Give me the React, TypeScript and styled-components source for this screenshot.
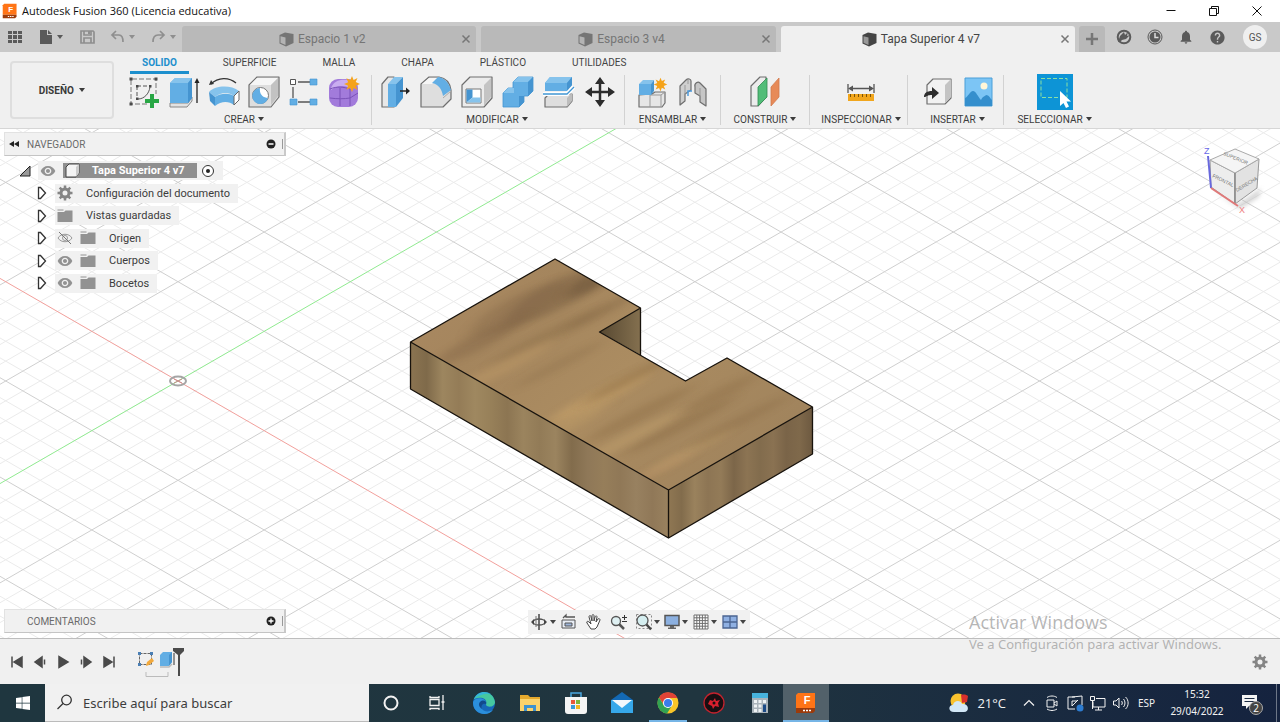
import React from "react";
import styled, { createGlobalStyle, css } from "styled-components";
import { MdNotifications, MdHelp, MdVisibility } from "react-icons/md";
import { FaWindows } from "react-icons/fa";

const uiFont = 'Roboto, "Liberation Sans", sans-serif';
const winFont = '"Open Sans", "Noto Sans", sans-serif';
const trayFont = '"Noto Sans", "Open Sans", sans-serif';

const GlobalStyle = createGlobalStyle`
  * { box-sizing: border-box; }
  body { margin: 0; background: #f0f0f0; font-family: ${uiFont}; color: #3c3c3c; }
  button, input { font: inherit; color: inherit; }
  button { border: 0; padding: 0; background: none; cursor: pointer; }
  ul { list-style: none; margin: 0; padding: 0; }
  svg { display: block; flex: none; }
`;

const Window = styled.div`
  position: relative;
  display: flex;
  flex-direction: column;
  min-height: 100vh;
  overflow: hidden;
`;

/* ---------- title bar ---------- */

const TitleBar = styled.header`
  display: flex;
  align-items: center;
  height: 22px;
  padding: 0 2px;
  background: #fff;
  color: #111;
  font-family: ${winFont};
`;

const Title = styled.h1`
  margin: 0 auto 0 4px;
  font-size: 11px;
  line-height: 16px;
  font-weight: 400;
`;

const CaptionButton = styled.button`
  display: flex;
  align-items: center;
  justify-content: center;
  width: 43px;
  height: 20px;
`;

/* ---------- document tabs ---------- */

const DocumentBar = styled.div`
  display: flex;
  height: 30px;
  background: #c9c9c9;
  color: #5c5c5c;
`;

const QuickAccess = styled.div`
  display: flex;
  align-items: center;
  gap: 15px;
  width: 182px;
  padding-left: 7px;
`;

const BarButton = styled.button<{ $dim?: boolean }>`
  display: flex;
  align-items: center;
  gap: 2px;
  color: ${(p) => (p.$dim ? "#8f8f8f" : "#5a5a5a")};
`;

const Tabs = styled.div`
  display: flex;
  flex: 1;
  gap: 5px;
  padding-top: 4px;
`;

const Tab = styled.div<{ $active?: boolean }>`
  display: flex;
  flex: 1;
  align-items: center;
  padding-left: 6px;
  border-radius: 3px 3px 0 0;
  background: ${(p) => (p.$active ? "#f0f0f0" : "#b9b9b9")};
  color: ${(p) => (p.$active ? "#454545" : "#757575")};
`;

const TabName = styled.button`
  display: flex;
  flex: 1;
  align-items: center;
  justify-content: center;
  gap: 4px;
  font-size: 12px;
  line-height: 16px;
`;

const TabClose = styled.button`
  display: flex;
  justify-content: center;
  width: 20px;
  color: #777;
`;

const AccountArea = styled.div`
  display: flex;
  align-items: center;
  gap: 15px;
  width: 205px;
  padding-left: 4px;
`;

const NewTab = styled.button`
  display: flex;
  align-self: flex-end;
  align-items: center;
  justify-content: center;
  width: 26px;
  height: 26px;
  margin-right: -4px;
  border-radius: 3px 3px 0 0;
  background: #b9b9b9;
  color: #777;
`;

const Avatar = styled.button`
  width: 24px;
  height: 24px;
  margin-left: 2px;
  border-radius: 50%;
  background: #efefef;
  color: #555;
  font-size: 10px;
`;

/* ---------- ribbon ---------- */

const Ribbon = styled.div`
  display: flex;
  height: 77px;
  border-bottom: 1px solid #d6d6d6;
  background: #f0f0f0;
`;

const Workspace = styled.button`
  width: 104px;
  height: 58px;
  margin: 9px 9px 0 10px;
  border: 2px solid #dedede;
  border-radius: 4px;
  color: #3a3a3a;
  font-size: 10px;
  font-weight: 700;
`;

const RibbonMain = styled.div`
  display: flex;
  flex: 1;
  flex-direction: column;
`;

const Categories = styled.nav`
  display: flex;
  gap: 22px;
  padding-left: 7px;
`;

const Category = styled.a<{ $active?: boolean }>`
  height: 22px;
  padding: 4px 12px 0;
  border-bottom: 3px solid ${(p) => (p.$active ? "#1d8fcd" : "transparent")};
  color: ${(p) => (p.$active ? "#1d8fcd" : "#444")};
  font-size: 10px;
  line-height: 14px;
  font-weight: ${(p) => (p.$active ? 700 : 400)};
  text-decoration: none;
`;

const Groups = styled.div`
  display: flex;
`;

const Group = styled.section<{ $width: number; $inset?: number; $lead?: number; $last?: boolean }>`
  display: flex;
  flex-direction: column;
  align-items: center;
  width: ${(p) => p.$width}px;
  height: 50px;
  margin-top: 1px;
  padding-right: ${(p) => p.$inset ?? 0}px;
  padding-left: ${(p) => p.$lead ?? 0}px;
  border-right: 1px solid ${(p) => (p.$last ? "transparent" : "#d2d2d2")};
`;

const Tools = styled.div<{ $gap?: number }>`
  display: flex;
  gap: ${(p) => p.$gap ?? 0}px;
  height: 36px;
  margin-top: -1px;
`;

const Tool = styled.button<{ $on?: boolean }>`
  display: flex;
  align-items: center;
  justify-content: center;
  width: ${(p) => (p.$on ? 36 : 40)}px;
  height: 36px;
  background: ${(p) => (p.$on ? "#0d94d6" : "none")};
`;

const GroupLabel = styled.button`
  margin-top: 3px;
  color: #3c3c3c;
  font-size: 10px;
  line-height: 14px;
  white-space: nowrap;
`;

const Caret = styled.span`
  display: inline-block;
  margin-left: 3px;
  border: 3px solid transparent;
  border-top: 4px solid currentColor;
  border-bottom: 0;
  vertical-align: 2px;
`;

/* ---------- modelling canvas ---------- */

const Canvas = styled.main`
  position: relative;
  flex: 1;
  min-height: 509px;
  overflow: hidden;
  background: #fff;
`;

const Scene = styled.svg`
  position: absolute;
  inset: 0;
  width: 100%;
  height: 100%;
`;

const CubeHolder = styled.div`
  position: absolute;
  top: 10px;
  right: 14px;
`;

const Browser = styled.aside`
  position: absolute;
  top: 3px;
  left: 4px;
  width: 282px;
`;

const Comments = styled.section`
  position: absolute;
  bottom: 5px;
  left: 4px;
  width: 282px;
`;

const PanelHeader = styled.div`
  display: flex;
  align-items: center;
  height: 24px;
  padding-left: 4px;
  border: 1px solid #e2e2e2;
  border-bottom-color: #c4c4c4;
  border-right: 2px solid #c9c9c9;
  background: #f1f1f1;
  color: #6a6a6a;
  font-size: 10px;
`;

const PanelTitle = styled.h2`
  margin: 0 auto 0 8px;
  font: inherit;
`;

const PanelDivider = styled.span`
  width: 1px;
  height: 10px;
  margin: 0 1px 0 6px;
  background: #999;
`;

const CollapseSlot = styled.button`
  width: 10px;
  height: 10px;
  color: #222;
`;

const Tree = styled.ul`
  display: flex;
  flex-direction: column;
  justify-content: space-between;
  height: 132px;
  margin-top: 5px;
`;

const TreeRow = styled.li<{ $root?: boolean }>`
  display: flex;
  align-items: center;
  height: 19px;
  padding-left: ${(p) => (p.$root ? 14 : 31)}px;
  font-size: 11px;
`;

const Expander = styled.button`
  width: 14px;
  margin-right: 6px;
`;

const RowBody = styled.span`
  display: flex;
  align-items: center;
  gap: 7px;
  height: 19px;
  padding: 0 8px 0 2px;
  background: #f1f1f1;
  color: #3c3c3c;
`;

const RowName = styled.span`
  padding-left: 6px;
  white-space: nowrap;
`;

const RootName = styled.span`
  display: flex;
  align-items: center;
  gap: 12px;
  height: 15px;
  margin-right: -3px;
  padding: 0 12px 0 2px;
  background: #8f8f8f;
  color: #fff;
  font-weight: 700;
  white-space: nowrap;
`;

const ViewBar = styled.div`
  position: absolute;
  bottom: 4px;
  left: 50%;
  display: flex;
  align-items: center;
  width: 222px;
  height: 24px;
  margin-left: -112px;
  padding-left: 3px;
  background: #f1f1f1;
`;

const ViewButton = styled.button<{ $menu?: boolean }>`
  display: flex;
  align-items: center;
  width: ${(p) => (p.$menu ? 29 : 25)}px;
  color: #444;
`;

/* ---------- timeline ---------- */

const Timeline = styled.footer`
  display: flex;
  align-items: center;
  height: 46px;
  padding: 0 12px 0 5px;
  border-top: 1px solid #bdbdbd;
  background: #f0f0f0;
  color: #4a4a4a;
`;

const PlayButton = styled.button`
  display: flex;
  justify-content: center;
  width: 23px;
`;

const Features = styled.button`
  margin: 0 auto 0 16px;
`;

/* ---------- desktop taskbar ---------- */

const Taskbar = styled.div`
  display: flex;
  height: 38px;
  background: linear-gradient(90deg, #1f363f 0%, #20353f 55%, #1b2d40 75%, #15233f 100%);
  color: #f2f2f2;
  font-family: ${winFont};
`;

const StartButton = styled.button`
  display: flex;
  align-items: center;
  justify-content: center;
  width: 45px;
  color: #fff;
`;

const SearchBox = styled.label`
  display: flex;
  align-items: center;
  gap: 10px;
  width: 324px;
  padding-left: 11px;
  border-bottom: 1px solid #bbb;
  background: #f1f1f1;
  color: #333;
`;

const SearchInput = styled.input`
  flex: 1;
  min-width: 0;
  border: 0;
  padding: 0;
  background: none;
  outline: 0;
  font-family: ${trayFont};
  font-size: 13px;
  line-height: 20px;
  &::placeholder { color: #3d3d3d; opacity: 1; }
`;

const TaskButton = styled.button<{ $running?: boolean; $current?: boolean }>`
  display: flex;
  align-items: center;
  justify-content: center;
  width: 46px;
  ${(p) => p.$running && css`background: linear-gradient(#76b5e6, #76b5e6) center bottom / 38px 2px no-repeat;`}
  ${(p) => p.$current && css`background: linear-gradient(#76b5e6, #76b5e6) center bottom / 46px 2px no-repeat, #52616a;`}
`;

const Tray = styled.div`
  display: flex;
  align-items: stretch;
  margin-left: auto;
`;

const Weather = styled.button`
  display: flex;
  align-items: center;
  gap: 7px;
  padding-right: 11px;
  font-size: 13px;
`;

const TrayButton = styled.button<{ $width?: number }>`
  display: flex;
  align-items: center;
  justify-content: center;
  width: ${(p) => p.$width ?? 23}px;
  font-family: ${trayFont};
  font-size: 10px;
  line-height: 17px;
`;

const ShowDesktop = styled.button`
  width: 4px;
  margin-left: 5px;
  border-left: 1px solid #6d7787;
`;

const Watermark = styled.div`
  position: absolute;
  right: 51px;
  bottom: 68px;
  width: 260px;
  color: rgba(150, 150, 150, 0.7);
  font-family: ${trayFont};
  font-size: 13px;
  line-height: 20px;
  white-space: nowrap;
  pointer-events: none;
`;

const WatermarkTitle = styled.div`
  font-family: ${winFont};
  font-size: 18px;
  line-height: 24px;
`;

/* ---------- icon drawings ---------- */

const outline = { stroke: "#6e6e6e", strokeWidth: 1.2, strokeLinejoin: "round" as const };
const BLUE = "#62aee4";
const BLUE_TOP = "#86c3ec";
const BLUE_DARK = "#4594d0";

const Ico = ({ s = 32, h, children }: { s?: number; h?: number; children: React.ReactNode }) => (
  <svg width={s} height={h ?? s} viewBox={`0 0 ${s} ${h ?? s}`} fill="none" aria-hidden="true">{children}</svg>
);

const Down = () => (
  <Ico s={8} h={6}><path d="M1 1h6L4 5z" fill="currentColor" /></Ico>
);

const DocCube = () => (
  <Ico s={15}>
    <path d="M0.500 3 6 0.500 14.500 2v9L7 14.500 0.500 11.500z" fill="currentColor" />
    <path d="M1.500 4.200 6.500 5.500v7.500L1.500 10.800z" fill="#fff" opacity=".45" />
  </Ico>
);

const Cross = () => (
  <Ico s={10}><path d="M1.500 1.500l7 7M8.500 1.500l-7 7" stroke="currentColor" strokeWidth="1.500" /></Ico>
);

const SketchIcon = () => (
  <Ico>
    <path d="M4 3h24v15M3 4v24h16" stroke="#777" strokeDasharray="5 2" />
    <path d="M9 10h13M9 10v13" stroke="#555" strokeDasharray="4 2" />
    <path d="M10 23c6 0 11-5 12-12" stroke="#555" />
    <path d="M1.500 1.500h3v3h-3zM26.500 1.500h3v3h-3zM1.500 26.500h3v3h-3zM8 9h2.500v2.500H8zM21 9h2.500v2.500H21zM8 21.500h2.500V24H8z" fill="#4a4a4a" />
    <path d="M22 18h4v5h5v4h-5v5h-4v-5h-5v-4h5z" fill="#28a745" />
  </Ico>
);

const ExtrudeIcon = () => (
  <Ico>
    <path d="M2 27h18l4-6v4l-5 6H2z" fill="#e2e2e2" stroke="#888" />
    <path d="M2 7v20h18l4-5V2H7z" fill={BLUE} />
    <path d="M2 7 7 2h17l-4 5z" fill={BLUE_TOP} />
    <path d="M20 7l4-5v20l-4 5z" fill={BLUE_DARK} />
    <path d="M29 27V5" stroke="#222" strokeWidth="1.300" />
    <path d="M26.500 7 29 2l2.500 5z" fill="#222" />
  </Ico>
);

const RevolveIcon = () => (
  <Ico>
    <path d="M3 8C10 1 21 1 28 7" stroke="#333" strokeWidth="1.300" />
    <path d="M1 9l2-5 3 4z" fill="#333" />
    <path d="M1 16C8 9 23 9 31 15l-5 5c-5-4-13-4-19 1z" fill={BLUE_TOP} />
    <path d="M1 16l6 5v9l-5-5z" fill={BLUE_DARK} />
    <path d="M7 21c6-4 14-4 19-1v9c-5-4-13-4-19 1z" fill={BLUE} />
    <path d="M26 20l5-5v9l-5 5z" fill="#fff" stroke="#666" />
  </Ico>
);

const HoleIcon = () => (
  <Ico>
    <path d="M1 9 9 1h22v20l-8 10H1z" fill="#dedede" {...outline} />
    <path d="M2 9l7-7h21l-7 7z" fill="#f6f6f6" />
    <path d="M23 9l7-7v18l-7 9z" fill="#c2c2c2" />
    <circle cx="12.500" cy="19.500" r="8" fill="#fff" stroke="#777" />
    <path d="M12 12a8 8 0 1 0 8 10c-5 0-9-4-8-10z" fill={BLUE} />
  </Ico>
);

const PatternIcon = () => (
  <Ico>
    <path d="M10 6h12M5 11v11M10 26h12" stroke="#555" strokeWidth="1.300" />
    <path d="M2.500 3.500h5v5h-5z" fill="#fff" stroke="#555" />
    <path d="M22 3h7v6h-7zM2 23h7v6H2zM22 23h7v6h-7z" fill={BLUE} stroke={BLUE_DARK} strokeWidth=".6" />
  </Ico>
);

const starPath = "M0-8l1.600 4 3.900-2-1.800 4L8 0l-4.200 1.800 1.800 4-4-1.900L0 8l-1.700-4-4 1.800 1.900-4L-8 0l4.200-1.800-1.900-4 4 1.900z";

const FormIcon = () => (
  <Ico>
    <rect x="1" y="3" width="29" height="28" rx="9" fill="#a27bdb" />
    <path d="M3 12c3-7 8-9 18-8l-1 7c-6-2-12-1-17 3z" fill="#c9adf0" />
    <path d="M2 13c7-3 14-2 20 0v17M12 12v18M2 22c7 1 14 1 20 0l8-5" stroke="#7a52b8" />
    <path d={starPath} transform="translate(24 8)" fill="#f5a31a" />
  </Ico>
);

const PressPullIcon = () => (
  <Ico>
    <path d="M3 8 9 1h6v30H3z" fill="#e8e8e8" {...outline} />
    <path d="M9 8h8v23H9z" fill={BLUE} />
    <path d="M9 8l6-7h9l-7 7z" fill={BLUE_TOP} />
    <path d="M17 8l7-7v21l-7 9z" fill={BLUE_DARK} />
    <path d="M21 15h7" stroke="#222" strokeWidth="1.500" />
    <path d="M27 11.500 31 15l-4 3.500z" fill="#222" />
  </Ico>
);

const FilletIcon = () => (
  <Ico>
    <path d="M1 8 9 1h10c7 1 11 6 12 13v9l-8 8H1z" fill="#dedede" {...outline} />
    <path d="M2 8l7-6h9l-6 6z" fill="#f6f6f6" />
    <path d="M23 22l8-7" stroke="#aaa" />
    <path d="M12 7l6-6c7 1 11 6 13 13l-8 6c-1-7-5-12-11-13z" fill={BLUE} />
  </Ico>
);

const ShellIcon = () => (
  <Ico>
    <path d="M1 9 9 1h22v21l-8 9H1z" fill="#ececec" {...outline} />
    <path d="M23 9l7-7v19l-7 9z" fill="#c4c4c4" />
    <path d="M5 13h15v14H5z" fill="#fff" stroke="#777" />
    <path d="M5.500 13.500h6v8l-6 5z" fill={BLUE_DARK} />
    <path d="M5.500 26.500l6-5h8v5z" fill={BLUE_TOP} />
  </Ico>
);

const CombineIcon = () => (
  <Ico>
    <path d="M11 6l5-5h15v14l-5 5h-4v6l-5 5H1V17l5-5h5z" fill={BLUE} stroke={BLUE_DARK} strokeWidth=".8" />
    <path d="M11 6l5-5h15l-5 5zM1 17l5-5h6v5z" fill={BLUE_TOP} />
    <path d="M26 6l5-5v14l-5 5zM17 20h5v6l-5 5z" fill={BLUE_DARK} />
  </Ico>
);

const SplitIcon = () => (
  <Ico>
    <path d="M2 22l4-4h23v7l-5 6H2z" fill="#dedede" {...outline} />
    <path d="M24 22l5-5v8l-5 6z" fill="#bdbdbd" />
    <path d="M2 7 7 1h22v8l-5 6H2z" fill={BLUE} />
    <path d="M2 7l5-6h22l-5 6z" fill={BLUE_TOP} />
    <path d="M24 7l5-6v8l-5 6z" fill={BLUE_DARK} />
    <path d="M0 18h24l7-7" stroke="#fff" strokeWidth="4" />
    <path d="M0 18h24l7-7" stroke="#4096d4" strokeWidth="1.300" />
  </Ico>
);

const MoveIcon = () => (
  <Ico>
    <path d="M16 5v22M5 16h22" stroke="#2c2c2c" strokeWidth="2.500" />
    <path d="M16 1l5 7H11zM16 31l-5-7h10zM1 16l7-5v10zM31 16l-7 5V11z" fill="#2c2c2c" />
  </Ico>
);

const ComponentIcon = () => (
  <Ico>
    <path d="M16 18l3-2h10v11l-3 4H3V19z" fill="#e6e6e6" {...outline} />
    <path d="M14 19h11v12M25 19l4-3M14 19v12" stroke="#999" />
    <path d="M3 8h12v11H3z" fill={BLUE} />
    <path d="M3 8l4-4h11l-3 4z" fill={BLUE_TOP} />
    <path d="M15 8l3-4v11l-3 4z" fill={BLUE_DARK} />
    <path d={starPath} transform="translate(24.500 8.500) scale(.85)" fill="#f5a31a" />
  </Ico>
);

const JointIcon = () => (
  <Ico>
    <path d="M3 10l6-6c2-2 5-1 5 1v9l-6 4v7l-5 4z" fill="#cfcfcf" {...outline} />
    <path d="M8 9v9M11 4v4" stroke="#999" />
    <path d="M18 11c-1-4 3-6 5-4l6 6v17l-6-4v-6l-5-3z" fill="#c6c6c6" {...outline} />
    <path d="M23 12v9" stroke="#999" />
    <path d="M11 20v-5h4" stroke="#4d9bdb" strokeWidth="1.500" />
  </Ico>
);

const PlaneIcon = () => (
  <Ico>
    <path d="M2 10l9-9h6v20l-8 9H2z" fill="#ececec" {...outline} />
    <path d="M9 11l9-9v19l-9 9z" fill="#52bd78" stroke="#318c52" strokeWidth=".8" />
    <path d="M22 11l8-9v19l-8 9z" fill="#e78a58" stroke="#d27a4c" strokeWidth=".8" />
  </Ico>
);

const MeasureIcon = () => (
  <Ico>
    <path d="M3 8v9M29 8v9M5 12.500h22" stroke="#555" strokeWidth="1.300" />
    <path d="M3 12.500l5-3v6zM29 12.500l-5-3v6z" fill="#555" />
    <path d="M3 18h26v7H3z" fill="#f1a61d" />
    <path d="M5.500 18v3M9.500 18v3M13.500 18v3M17.500 18v3M21.500 18v3M25.500 18v3" stroke="#7a5208" />
  </Ico>
);

const InsertIcon = () => (
  <Ico>
    <path d="M5 9l6-6h18v19l-6 6H5z" fill="#f2f2f2" {...outline} />
    <path d="M23 9l6-6v18l-6 6z" fill="#c4c4c4" />
    <path d="M2 21c0-4 3-6 8-6v-4l7 6-7 6v-4c-4 0-5 1-7 2z" fill="#2e2e2e" />
  </Ico>
);

const ImageIcon = () => (
  <Ico>
    <path d="M3 2h27v28H3z" fill="#7cc5f5" stroke="#4a9fd8" />
    <circle cx="22" cy="10" r="3.500" fill="#fff6d8" />
    <path d="M3 22c3-1 5-7 8-7s5 6 8 9c2-4 3-3 5-5 3 0 4 3 6 5v6H3z" fill="#358fcd" />
  </Ico>
);

const SelectIcon = () => (
  <Ico>
    <path d="M2 2.500h26v19H2z" stroke="#8be0a2" strokeDasharray="4 2" />
    <path d="M21 15v15l3.500-3 2.500 5 3-1.500-2.500-5H32z" fill="#fff" />
  </Ico>
);

const Eye = () => <MdVisibility size={16} color="#929292" />;

const EyeOff = () => (
  <Ico s={16}>
    <path d="M1 8c3-5 11-5 14 0-3 5-11 5-14 0z" stroke="#999" />
    <circle cx="8" cy="8" r="2.500" stroke="#999" />
    <path d="M2 2l12 12" stroke="#777" />
  </Ico>
);

const Folder = () => (
  <Ico s={16}><path d="M0.500 4h6.500l1.500-1.500h7V14h-15z" fill="#929292" /><path d="M0.500 2h6" stroke="#929292" /></Ico>
);

const Gear = ({ s = 16 }: { s?: number }) => (
  <Ico s={s}>
    <circle cx="8" cy="8" r="4" stroke="#858585" strokeWidth="3" />
    <path d="M8 0.500v3M8 12.500v3M0.500 8h3M12.500 8h3M2.700 2.700l2 2M11.300 11.300l2 2M2.700 13.300l2-2M11.300 4.700l2-2" stroke="#858585" strokeWidth="2.500" />
  </Ico>
);

/* ---------- canvas scene ---------- */

const ORIGIN = { x: 178, y: 252 };
const STEP = { x: 17.23, y: 9.93 };

const gridLines = (dir: 1 | -1) => {
  const lines: { k: number; d: string }[] = [];
  for (let k = -120; k <= 160; k++) {
    const x = ORIGIN.x + k * STEP.x;
    const y = ORIGIN.y - dir * k * STEP.y;
    const rx = 200 * STEP.x;
    const ry = 200 * STEP.y * dir;
    lines.push({ k, d: `M${x - rx} ${y - ry}L${x + rx} ${y + ry}` });
  }
  return lines;
};

const allLines = [...gridLines(1), ...gridLines(-1)];
const minorPath = allLines.filter((l) => l.k % 5 !== 0).map((l) => l.d).join("");
const majorPath = allLines.filter((l) => l.k % 5 === 0 && l.k !== 0).map((l) => l.d).join("");

const grain = [
  { x: 560, y: 165, rx: 60, ry: 14, c: "#6f573c", o: 0.35 },
  { x: 590, y: 154, rx: 26, ry: 8, c: "#4f3b27", o: 0.3 },
  { x: 520, y: 180, rx: 55, ry: 14, c: "#7b5f42", o: 0.3 },
  { x: 480, y: 212, rx: 50, ry: 8, c: "#7b5f42", o: 0.35 },
  { x: 600, y: 183, rx: 40, ry: 5, c: "#7d6040", o: 0.35 },
  { x: 545, y: 208, rx: 60, ry: 6, c: "#836643", o: 0.3 },
  { x: 500, y: 240, rx: 60, ry: 7, c: "#bb9867", o: 0.5 },
  { x: 560, y: 235, rx: 50, ry: 5, c: "#8a6d48", o: 0.3 },
  { x: 600, y: 268, rx: 60, ry: 8, c: "#c5a06a", o: 0.6 },
  { x: 570, y: 295, rx: 45, ry: 6, c: "#bd9b67", o: 0.45 },
  { x: 625, y: 252, rx: 45, ry: 5, c: "#83653e", o: 0.4 },
  { x: 640, y: 285, rx: 60, ry: 6, c: "#8a6b42", o: 0.35 },
  { x: 630, y: 309, rx: 60, ry: 6, c: "#c1a06d", o: 0.45 },
  { x: 680, y: 297, rx: 60, ry: 5, c: "#84653f", o: 0.35 },
  { x: 720, y: 265, rx: 40, ry: 6, c: "#8b6c45", o: 0.35 },
  { x: 690, y: 322, rx: 50, ry: 5, c: "#c0a06e", o: 0.4 },
  { x: 740, y: 292, rx: 55, ry: 5, c: "#876843", o: 0.3 },
  { x: 660, y: 340, rx: 40, ry: 5, c: "#bd9468", o: 0.4 },
];

const frontBands = ["#8b7451", "#7f6a4a", "#9d865f", "#947c57", "#9f8860", "#978059", "#8c7552", "#9b845e", "#927b57", "#9b845f", "#826c4c", "#8f7858", "#967e5a", "#907857", "#988160", "#907858", "#9a825f"];
const rightBands = ["#8f7753", "#826c4c", "#9a825d", "#8d7554", "#937b58", "#7c6649", "#8c7453", "#826c4d", "#8a7252", "#7a6448", "#7f694b", "#6d5940"];

const Bands = ({ id, colors }: { id: string; colors: string[] }) => (
  <linearGradient id={id}>
    {colors.map((c, i) => (
      <stop key={i} offset={i / (colors.length - 1)} stopColor={c} />
    ))}
  </linearGradient>
);

const TOP_FACE = "M410.500 213L555 130L640.500 179L599.500 203L685.500 252L727 229L812.500 278L668.500 361Z";

const ModelScene = () => (
  <Scene role="img" aria-label="Tapa Superior 4 v7">
    <defs>
      <Bands id="front" colors={frontBands} />
      <Bands id="right" colors={rightBands} />
      <linearGradient id="top" x1="0" y1="0" x2="1" y2="0.6">
        <stop offset="0" stopColor="#ac8a63" />
        <stop offset=".3" stopColor="#a4855d" />
        <stop offset=".6" stopColor="#ab8c61" />
        <stop offset="1" stopColor="#a1845d" />
      </linearGradient>
      <linearGradient id="notch"><stop offset="0" stopColor="#574831" /><stop offset="1" stopColor="#84704f" /></linearGradient>
      <clipPath id="topClip"><path d={TOP_FACE} /></clipPath>
      <filter id="soft" x="-30%" y="-150%" width="160%" height="400%"><feGaussianBlur stdDeviation="9 3" /></filter>
    </defs>
    <path d={minorPath} stroke="#ebebeb" />
    <path d={majorPath} stroke="#cfcfcf" />
    <path d="M-3268-1734L178 252L3624 2238" stroke="#f2a09c" />
    <path d="M-3268 2238L178 252L3624-1734" stroke="#90ea90" />
    <ellipse cx="178" cy="252" rx="8" ry="4.500" fill="none" stroke="#a5a5a5" strokeWidth="2" />
    <path d="M174 250l8 4M182 250l-8 4" stroke="#c78b8b" />
    <path d="M640 226L685.500 252" stroke="#a9b4c4" />
    <path d={TOP_FACE} fill="url(#top)" />
    <g clipPath="url(#topClip)">
      {grain.map((g, i) => (
        <g key={i} transform={`translate(${g.x} ${g.y}) rotate(-27)`}>
          <ellipse rx={g.rx} ry={g.ry} fill={g.c} opacity={g.o} filter="url(#soft)" />
        </g>
      ))}
    </g>
    <path d="M410.500 213L668.500 361V409L410.500 260Z" fill="url(#front)" />
    <path d="M668.500 361L812.500 278V325L668.500 409Z" fill="url(#right)" />
    <path d="M599.500 203L640.500 179V226Z" fill="url(#notch)" />
    <path d={`${TOP_FACE}M410.500 213V260L668.500 409L812.500 325V278M668.500 361V409M640.500 179V226`} fill="none" stroke="#17120c" strokeWidth="1.300" strokeLinejoin="round" />
  </Scene>
);

const ViewCube = () => (
  <svg width="66" height="78" viewBox="0 0 66 78" fontFamily="Liberation Sans" aria-label="ViewCube">
    <defs>
      <filter id="cubeShadow"><feGaussianBlur stdDeviation="2" /></filter>
    </defs>
    <path d="M12 51l26 14 23-16-2 9-19 12z" fill="#bbb" opacity=".6" filter="url(#cubeShadow)" />
    <path d="M10 21l25 13v31L11 48z" fill="#ededed" stroke="#999" />
    <path d="M35 34l24-14-2 29-22 16z" fill="#e2e2e2" stroke="#999" />
    <path d="M10 21 35 10l24 10-24 14z" fill="#f5f5f5" stroke="#aaa" />
    <path d="M35 34v30" stroke="#777" />
    <path d="M8 17l3 32" stroke="#6868dd" strokeWidth="2" />
    <path d="M11 49l27 18" stroke="#e07878" strokeWidth="2" />
    <text x="4" y="15" fontSize="9" fill="#6868e8">Z</text>
    <text x="39" y="74" fontSize="9" fill="#f08080">X</text>
    <g fill="#777" fontSize="5">
      <text transform="translate(23 16) rotate(22)">SUPERIOR</text>
      <text transform="translate(12 38) rotate(26)">FRONTAL</text>
      <text transform="translate(37 53) rotate(-31)">DERECHA</text>
    </g>
  </svg>
);

/* ---------- data ---------- */

type ToolDef = { name: string; icon: React.ReactNode; on?: boolean };
const groups: { label: string; width: number; gap?: number; inset?: number; lead?: number; tools: ToolDef[] }[] = [
  {
    label: "CREAR", width: 249, inset: 6,
    tools: [
      { name: "Crear boceto", icon: <SketchIcon /> },
      { name: "Extruir", icon: <ExtrudeIcon /> },
      { name: "Revolución", icon: <RevolveIcon /> },
      { name: "Agujero", icon: <HoleIcon /> },
      { name: "Patrón", icon: <PatternIcon /> },
      { name: "Crear forma", icon: <FormIcon /> },
    ],
  },
  {
    label: "MODIFICAR", width: 253, gap: 1, inset: 2,
    tools: [
      { name: "Pulsar/tirar", icon: <PressPullIcon /> },
      { name: "Empalme", icon: <FilletIcon /> },
      { name: "Vaciado", icon: <ShellIcon /> },
      { name: "Combinar", icon: <CombineIcon /> },
      { name: "Dividir cuerpo", icon: <SplitIcon /> },
      { name: "Mover", icon: <MoveIcon /> },
    ],
  },
  { label: "ENSAMBLAR", width: 96, gap: 1, tools: [{ name: "Nuevo componente", icon: <ComponentIcon /> }, { name: "Unión", icon: <JointIcon /> }] },
  { label: "CONSTRUIR", width: 89, tools: [{ name: "Plano", icon: <PlaneIcon /> }] },
  { label: "INSPECCIONAR", width: 98, lead: 5, tools: [{ name: "Medir", icon: <MeasureIcon /> }] },
  { label: "INSERTAR", width: 96, lead: 4, tools: [{ name: "Insertar derivada", icon: <InsertIcon /> }, { name: "Lienzo", icon: <ImageIcon /> }] },
  { label: "SELECCIONAR", width: 102, tools: [{ name: "Seleccionar", icon: <SelectIcon />, on: true }] },
];

const categories = ["SOLIDO", "SUPERFICIE", "MALLA", "CHAPA", "PLÁSTICO", "UTILIDADES"];
const documents = ["Espacio 1 v2", "Espacio 3 v4", "Tapa Superior 4 v7"];

const nodes: { name: string; icons: React.ReactNode[] }[] = [
  { name: "Configuración del documento", icons: [<Gear key="g" />] },
  { name: "Vistas guardadas", icons: [<Folder key="f" />] },
  { name: "Origen", icons: [<EyeOff key="e" />, <Folder key="f" />] },
  { name: "Cuerpos", icons: [<Eye key="e" />, <Folder key="f" />] },
  { name: "Bocetos", icons: [<Eye key="e" />, <Folder key="f" />] },
];

const viewTools: { name: string; menu?: boolean; icon: React.ReactNode }[] = [
  { name: "Órbita", menu: true, icon: <Ico s={18}><path d="M8 1v16" stroke="#444" strokeWidth="1.500" /><ellipse cx="8" cy="9" rx="6" ry="3" stroke="#555" strokeWidth="1.300" /><path d="M5 3v11" stroke="#777" /><path d="M0 9l3-3v6zM16 9l-3-3v6z" fill="#444" /></Ico> },
  { name: "Mirar a", icon: <Ico s={18}><path d="M2 7h13v8H2z" fill="#e8edf5" stroke="#555" /><path d="M5 10h7v3H5z" fill="#9db4d8" stroke="#555" /><path d="M3 5l3-3v2h9" stroke="#555" strokeWidth="1.300" /></Ico> },
  { name: "Encuadre", icon: <Ico s={18}><path d="M6 16 2 10c-1-2 1-2 2-1l2 2-2-7c0-2 2-2 2 0l1 4V3c0-2 2-2 2 0v5l1-4c1-2 2-1 2 0l-1 5 2-3c1-1 2 0 2 1l-3 7-2 2z" fill="#fff" stroke="#444" /></Ico> },
  { name: "Zoom", icon: <Ico s={18}><circle cx="6" cy="8" r="4.500" fill="#dff0f2" stroke="#555" strokeWidth="1.300" /><path d="M9 11l5 5" stroke="#555" strokeWidth="2.500" /><path d="M12 4.500h5M14.500 2v5M12 8.500h5" stroke="#333" /></Ico> },
  { name: "Zoom ventana", menu: true, icon: <Ico s={18}><path d="M1.500 1.500h15v14h-15z" stroke="#888" strokeDasharray="2 2" /><circle cx="7.500" cy="7.500" r="5.500" fill="#d5eef0" stroke="#555" strokeWidth="1.300" /><path d="M11.500 11.500l4.500 5" stroke="#444" strokeWidth="2.500" /></Ico> },
  { name: "Visualización", menu: true, icon: <Ico s={18}><path d="M2 2.500h14v10H2z" fill="#8cb0e0" stroke="#555" strokeWidth="1.500" /><path d="M7 13h4v1.500h2V16H5v-1.500h2z" fill="#666" /></Ico> },
  { name: "Rejilla", menu: true, icon: <Ico s={18}><path d="M2 2h14v14H2zM2 4.800h14M2 7.600h14M2 10.400h14M2 13.200h14M4.800 2v14M7.600 2v14M10.400 2v14M13.200 2v14" fill="#fff" stroke="#6e6e6e" /></Ico> },
  { name: "Ventanas", menu: true, icon: <Ico s={18}><path d="M2 3h14v12H2zM9 3v12M2 9h14" fill="#8fb0e2" stroke="#4b6491" strokeWidth="1.300" /></Ico> },
];

const playback = [
  { name: "Inicio", d: "M3 2.500v11M13 3v10L5 8z" },
  { name: "Paso atrás", d: "M10 3v10L3 8zM12.500 5.500v5" },
  { name: "Reproducir", d: "M4 2.500v11L13 8z" },
  { name: "Paso adelante", d: "M6 3v10l7-5zM3.500 5.500v5" },
  { name: "Final", d: "M13 2.500v11M3 3v10l8-5z" },
];

const taskApps: { name: string; running?: boolean; current?: boolean; icon: React.ReactNode }[] = [
  { name: "Cortana", icon: <Ico s={18}><circle cx="8" cy="9" r="6.500" stroke="#f2f2f2" strokeWidth="2" /></Ico> },
  { name: "Vista de tareas", icon: <Ico s={18}><path d="M1 5.500h9v6H1zM1 2v1.500h9V2M1 16v-1.500h9V16M14 1v15M12.500 8h3" stroke="#f2f2f2" strokeWidth="1.300" /></Ico> },
  { name: "Edge", icon: <Ico s={24}><circle cx="12" cy="12" r="11" fill="#1768b8" /><path d="M2 8C6-1 21-1 23 11c0 5-7 6-9 3 2-6-4-9-12-6z" fill="#46c8a0" /><path d="M2 8c3-7 11-9 17-5-6-1-12 1-17 5z" fill="#35b8d8" /><path d="M1 11c3-6 13-4 13 1-4-2-6 3-4 6s7 3 11 1c-3 4-9 5-13 3-5-2-7-6-7-11z" fill="#2b8fdc" /><path d="M8 11c3-3 7-1 6 2-4-1-5 2-4 5-3-2-4-5-2-7z" fill="#124a8c" /></Ico> },
  { name: "Explorador", icon: <Ico s={22}><path d="M1 3h8l2 2h10v14H1z" fill="#e5a92d" /><path d="M1 7h20v12H1z" fill="#fbd36b" /><path d="M5 19v-6h12v6h-3v-3H8v3z" fill="#3e93d0" /></Ico> },
  { name: "Store", icon: <Ico s={24}><path d="M7 7V2h10v5" stroke="#4aa6df" strokeWidth="1.500" /><path d="M1 6h22v14c0 2-1 3-3 3H4c-2 0-3-1-3-3z" fill="#f4f4f4" /><path d="M7 9h4v4H7z" fill="#e8573b" /><path d="M12 9h4v4h-4z" fill="#7db53c" /><path d="M7 14h4v4H7z" fill="#3a9adb" /><path d="M12 14h4v4h-4z" fill="#f2b722" /></Ico> },
  { name: "Correo", icon: <Ico s={24}><path d="M1 9 12 1l11 8v12H1z" fill="#1369b4" /><path d="M1 9h22v13H1z" fill="#36a8ea" /><path d="M2 9h20l-10 8z" fill="#f3f8fc" /></Ico> },
  { name: "Chrome", running: true, icon: <Ico s={22}><circle cx="11" cy="11" r="10.500" fill="#f8c528" /><path d="M2 5.500A10.500 10.500 0 0 1 20.500 6H11l-4 7z" fill="#e04336" /><path d="M2 5.500A10.500 10.500 0 0 0 10 21.500l5-8-8 0z" fill="#31a352" /><circle cx="11" cy="11" r="5" fill="#fff" /><circle cx="11" cy="11" r="4" fill="#3a7de8" /></Ico> },
  { name: "Juegos", icon: <Ico s={24}><circle cx="12" cy="12" r="10" fill="#180f12" stroke="#c4222d" strokeWidth="1.300" /><path d="M6 13l2-4 3 1 2-3 1 3 4-1-2 3 1 4-4-1-2 3-1-3z" fill="#d9202e" /><circle cx="12" cy="12" r="1.500" fill="#180f12" /></Ico> },
  { name: "Calculadora", icon: <Ico s={22}><path d="M3 1h16v20H3z" fill="#a9b3ba" /><path d="M3 1h16v5H3z" fill="#47b3dd" /><path d="M5 8h3v3H5zM9.500 8h3v3h-3zM14 8h3v3h-3zM5 12.500h3v3H5zM9.500 12.500h3v3h-3zM5 17h3v3H5zM9.500 17h3v3h-3z" fill="#eef2f4" /><path d="M14 12.500h3V20h-3z" fill="#1b4a86" /></Ico> },
  { name: "Fusion 360", current: true, icon: <FusionLogo s={22} /> },
];

function FusionLogo({ s }: { s: number }) {
  return (
    <svg width={s} height={s} viewBox="0 0 22 22" aria-hidden="true">
      <path d="M3 1h17v15H1V3z" fill="#ff7416" />
      <path d="M1 16h19v3l-2 2H1z" fill="#9c3b0b" />
      <text x="12" y="12" fill="#fff" fontFamily="Liberation Sans" fontWeight="700" fontSize="11" textAnchor="middle">F</text>
      <path d="M8 18.500h8" stroke="#fff" strokeWidth="1.500" strokeDasharray="2 1" />
    </svg>
  );
}

/* ---------- page ---------- */

export default function App() {
  return (
    <Window>
      <GlobalStyle />
      <TitleBar>
        <FusionLogo s={16} />
        <Title>Autodesk Fusion 360 (Licencia educativa)</Title>
        <CaptionButton aria-label="Minimizar"><Ico s={12}><path d="M1.500 5.500h9" stroke="#111" /></Ico></CaptionButton>
        <CaptionButton aria-label="Restaurar"><Ico s={12}><path d="M1.500 3.500h7v7h-7zM3.500 3.500v-2h7v7h-2" stroke="#111" /></Ico></CaptionButton>
        <CaptionButton aria-label="Cerrar"><Ico s={12}><path d="M1.500 1.500l9 9M10.500 1.500l-9 9" stroke="#111" /></Ico></CaptionButton>
      </TitleBar>

      <DocumentBar>
        <QuickAccess>
          <BarButton aria-label="Panel de datos"><Ico s={16}><path d="M1 2h4v3H1zM6 2h4v3H6zM11 2h4v3h-4zM1 6h4v4H1zM6 6h4v4H6zM11 6h4v4h-4zM1 11h4v3H1zM6 11h4v3H6zM11 11h4v3h-4z" fill="currentColor" /></Ico></BarButton>
          <BarButton aria-label="Archivo"><Ico s={16}><path d="M2 1h7v5h5v9H2zM10 1l4 4h-4z" fill="currentColor" /></Ico><Down /></BarButton>
          <BarButton $dim aria-label="Guardar"><Ico s={16}><path d="M2 2h12l1 1v11H2zM5 2v4h7V2M5 14v-5h7v5" stroke="currentColor" strokeWidth="1.700" /><path d="M9 2h2v3H9z" fill="currentColor" /></Ico></BarButton>
          <BarButton $dim aria-label="Deshacer"><Ico s={16}><path d="M6 2 2 6l4 4M2.500 6H9c3 0 4 3 4 7" stroke="currentColor" strokeWidth="1.700" /></Ico><Down /></BarButton>
          <BarButton $dim aria-label="Rehacer"><Ico s={16}><path d="M9 2l4 4-4 4M12.500 6H7c-4 0-5 3-5 7" stroke="currentColor" strokeWidth="1.700" /></Ico><Down /></BarButton>
        </QuickAccess>
        <Tabs>
          {documents.map((d, i) => (
            <Tab key={d} $active={i === 2}>
              <TabName><DocCube />{d}</TabName>
              <TabClose aria-label={`Cerrar ${d}`}><Cross /></TabClose>
            </Tab>
          ))}
        </Tabs>
        <AccountArea>
          <NewTab aria-label="Nuevo diseño"><Ico s={14}><path d="M7 1v12M1 7h12" stroke="currentColor" strokeWidth="2.500" /></Ico></NewTab>
          <BarButton aria-label="Extensiones"><Ico s={16}><circle cx="8" cy="8" r="6.300" stroke="currentColor" strokeWidth="2" /><path d="M2 13l2-6 4-4 1 3 3-3-1 4 3-1-4 4-4 1-2 2z" fill="currentColor" /></Ico></BarButton>
          <BarButton aria-label="Estado de trabajos"><Ico s={16}><circle cx="8" cy="8" r="7" stroke="currentColor" /><circle cx="8" cy="8" r="5.500" fill="currentColor" /><path d="M8 4v4.500h3.500" stroke="#ddd" strokeWidth="1.500" /></Ico></BarButton>
          <BarButton aria-label="Notificaciones"><MdNotifications size={16} /></BarButton>
          <BarButton aria-label="Ayuda"><MdHelp size={17} /></BarButton>
          <Avatar>GS</Avatar>
        </AccountArea>
      </DocumentBar>

      <Ribbon>
        <Workspace>DISEÑO <Caret /></Workspace>
        <RibbonMain>
          <Categories>
            {categories.map((c, i) => <Category key={c} href="#" $active={i === 0}>{c}</Category>)}
          </Categories>
          <Groups>
            {groups.map((g, i) => (
              <Group key={g.label} $width={g.width} $inset={g.inset} $lead={g.lead} $last={i === groups.length - 1}>
                <Tools $gap={g.gap}>
                  {g.tools.map((t) => <Tool key={t.name} $on={t.on} aria-label={t.name}>{t.icon}</Tool>)}
                </Tools>
                <GroupLabel>{g.label}<Caret /></GroupLabel>
              </Group>
            ))}
          </Groups>
        </RibbonMain>
      </Ribbon>

      <Canvas>
        <ModelScene />
        <CubeHolder><ViewCube /></CubeHolder>
        <Browser>
          <PanelHeader>
            <CollapseSlot aria-label="Contraer"><Ico s={10}><path d="M5 2v6L0 5zM10 2v6L5 5z" fill="currentColor" /></Ico></CollapseSlot>
            <PanelTitle>NAVEGADOR</PanelTitle>
            <CollapseSlot aria-label="Opciones"><Ico s={10}><circle cx="5" cy="5" r="4.500" fill="#222" /><path d="M2.500 5h5" stroke="#fff" strokeWidth="1.500" /></Ico></CollapseSlot>
            <PanelDivider />
          </PanelHeader>
          <Tree>
            <TreeRow $root>
              <Expander aria-label="Contraer"><Ico s={14}><path d="M12 2v10H2z" fill="#999" stroke="#222" /></Ico></Expander>
              <RowBody>
                <Eye />
                <RootName><Ico s={15}><path d="M1 4l3-3h10v9l-3 4H1z" fill="#f4f4f4" stroke="#444" /><path d="M11 4l3-3v9l-3 4z" fill="#ccc" /></Ico>Tapa Superior 4 v7</RootName>
                <Ico s={14}><circle cx="7" cy="7" r="5.500" fill="#fff" stroke="#333" /><circle cx="7" cy="7" r="2" fill="#222" /></Ico>
              </RowBody>
            </TreeRow>
            {nodes.map((n) => (
              <TreeRow key={n.name}>
                <Expander aria-label={`Expandir ${n.name}`}><Ico s={14}><path d="M3.500 1.500h2l5 5.500-5 5.500h-2z" fill="#fff" stroke="#333" strokeWidth="1.300" /></Ico></Expander>
                <RowBody>{n.icons}<RowName>{n.name}</RowName></RowBody>
              </TreeRow>
            ))}
          </Tree>
        </Browser>
        <Comments>
          <PanelHeader>
            <CollapseSlot aria-hidden="true" tabIndex={-1} />
            <PanelTitle>COMENTARIOS</PanelTitle>
            <CollapseSlot aria-label="Añadir comentario"><Ico s={10}><circle cx="5" cy="5" r="4.500" fill="#222" /><path d="M2.500 5h5M5 2.500v5" stroke="#fff" strokeWidth="1.300" /></Ico></CollapseSlot>
            <PanelDivider />
          </PanelHeader>
        </Comments>
        <ViewBar>
          {viewTools.map((t) => (
            <ViewButton key={t.name} $menu={t.menu} aria-label={t.name}>{t.icon}{t.menu && <Down />}</ViewButton>
          ))}
        </ViewBar>
      </Canvas>

      <Timeline>
        {playback.map((p) => (
          <PlayButton key={p.name} aria-label={p.name}><Ico s={16}><path d={p.d} fill="currentColor" stroke="currentColor" strokeWidth="1.500" /></Ico></PlayButton>
        ))}
        <Features aria-label="Operaciones">
          <Ico s={52} h={34}>
            <path d="M3.500 8.500h12v11h-12z" stroke="#666" strokeDasharray="3 1" />
            <path d="M2 7h3v3H2zM14 7h3v3h-3zM2 18h3v3H2z" fill="#4a7fb5" />
            <path d="M10 21l1-4 5-4 2 3-5 4z" fill="#f2a93c" />
            <path d="M24 10l3-3h9v10l-3 4h-9z" fill={BLUE} />
            <path d="M33 10l3-3v10l-3 4z" fill={BLUE_DARK} />
            <path d="M24 22h9l3-3" stroke="#bbb" strokeWidth="1.500" />
            <path d="M38 20V8" stroke="#333" />
            <path d="M10 27v4.500h22V27" stroke="#bbb" />
            <path d="M37 3h11v3l-4 4v21h-2V10l-5-4z" fill="#4b4b4b" />
          </Ico>
        </Features>
        <BarButton aria-label="Ajustes"><Gear /></BarButton>
      </Timeline>

      <Taskbar>
        <StartButton aria-label="Inicio"><FaWindows size={16} /></StartButton>
        <SearchBox>
          <Ico s={17}><circle cx="10.500" cy="6" r="4.800" stroke="#333" strokeWidth="1.300" /><path d="M7 9.500 1.500 15" stroke="#333" strokeWidth="1.300" /></Ico>
          <SearchInput aria-label="Buscar" placeholder="Escribe aquí para buscar" />
        </SearchBox>
        {taskApps.map((a) => (
          <TaskButton key={a.name} aria-label={a.name} $running={a.running} $current={a.current}>{a.icon}</TaskButton>
        ))}
        <Tray>
          <Weather>
            <Ico s={22}><circle cx="10" cy="9" r="7.500" fill="#f9c22e" /><path d="M13 3c3-1 6 0 7 1l-1 6-5 1z" fill="#d9302c" /><path d="M6 20c-6 0-6-7-1-7 1-5 8-5 9-1 7-1 8 8 2 8z" fill="#d3e8f7" /></Ico>
            21°C
          </Weather>
          <TrayButton aria-label="Iconos ocultos"><Ico s={14}><path d="M2 9.500l5-5 5 5" stroke="#f2f2f2" strokeWidth="1.200" /></Ico></TrayButton>
          <TrayButton aria-label="Reunión"><Ico s={16}><path d="M3 2.500c3-2 7-2 10 0M3 14c3 2 7 2 10 0M3 5h7v7H3zM10 8l3-2v5l-3-2" stroke="#f2f2f2" /></Ico></TrayButton>
          <TrayButton aria-label="Cuenta"><Ico s={18}><path d="M9 3H2v12h7M6 3l10-1v9M6 12V7h5M6 12l6-6" stroke="#f2f2f2" /><circle cx="14" cy="14" r="3.500" fill="#2d7cd0" /></Ico></TrayButton>
          <TrayButton aria-label="Red"><Ico s={16}><path d="M3 6.500V12h12V3.500H6M8.500 12v3M5 15h7M0.500 1.500h4v4h-4zM2.500 5.500V14" stroke="#f2f2f2" /></Ico></TrayButton>
          <TrayButton aria-label="Volumen"><Ico s={16}><path d="M0.500 6h2.500l3-3v10l-3-3H0.500zM8.500 6c1 1 1 3 0 4M10.500 4c2 2 2 6 0 8M12.500 2c3.500 3 3.500 9 0 12" stroke="#f2f2f2" /></Ico></TrayButton>
          <TrayButton $width={29}>ESP</TrayButton>
          <TrayButton $width={72}>15:32<br />29/04/2022</TrayButton>
          <TrayButton $width={38} aria-label="Centro de notificaciones">
            <Ico s={24}>
              <path d="M2 4h15v11H9l-3 3v-3H2z" fill="#f4f4f4" />
              <path d="M4.500 7.500h10M4.500 10.500h10" stroke="#1a2a42" />
              <circle cx="16" cy="17" r="6.500" fill="#444" stroke="#aaa" />
              <text x="16" y="21" textAnchor="middle" fill="#fff" fontFamily="Open Sans" fontSize="10">2</text>
            </Ico>
          </TrayButton>
          <ShowDesktop aria-label="Mostrar escritorio" />
        </Tray>
      </Taskbar>

      <Watermark>
        <WatermarkTitle>Activar Windows</WatermarkTitle>
        Ve a Configuración para activar Windows.
      </Watermark>
    </Window>
  );
}
